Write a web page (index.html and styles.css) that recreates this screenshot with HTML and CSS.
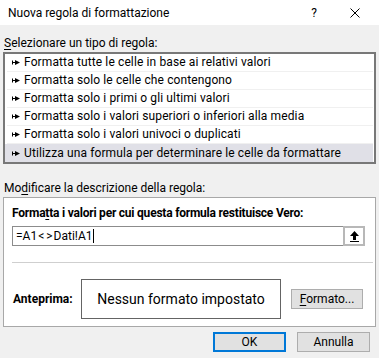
FILE: index.html
```html
<!DOCTYPE html>
<html lang="it">
<head>
<meta charset="utf-8">
<title>Nuova regola di formattazione</title>
<link rel="stylesheet" href="styles.css">
</head>
<body>
<div class="dialog">
  <div class="titlebar">
    <span class="title">Nuova regola di formattazione</span>
    <span class="help">?</span>
    <span class="close"><svg width="10" height="10" viewBox="0 0 10 10"><path d="M0.5 0.5L9.5 9.5M9.5 0.5L0.5 9.5" stroke="#000" stroke-width="1" fill="none"/></svg></span>
  </div>
  <div class="main">
    <div class="label label-select"><u>S</u>elezionare un tipo di regola:</div>
    <ul class="list">
      <li><svg class="arrow" width="8" height="5" viewBox="0 0 8 5"><path d="M0 0.5h1v1.5h2V0l5 2.5L3 5V3H1v1.5H0z" fill="#000"/></svg>Formatta tutte le celle in base ai relativi valori</li>
      <li><svg class="arrow" width="8" height="5" viewBox="0 0 8 5"><path d="M0 0.5h1v1.5h2V0l5 2.5L3 5V3H1v1.5H0z" fill="#000"/></svg>Formatta solo le celle che contengono</li>
      <li><svg class="arrow" width="8" height="5" viewBox="0 0 8 5"><path d="M0 0.5h1v1.5h2V0l5 2.5L3 5V3H1v1.5H0z" fill="#000"/></svg>Formatta solo i primi o gli ultimi valori</li>
      <li><svg class="arrow" width="8" height="5" viewBox="0 0 8 5"><path d="M0 0.5h1v1.5h2V0l5 2.5L3 5V3H1v1.5H0z" fill="#000"/></svg>Formatta solo i valori superiori o inferiori alla media</li>
      <li><svg class="arrow" width="8" height="5" viewBox="0 0 8 5"><path d="M0 0.5h1v1.5h2V0l5 2.5L3 5V3H1v1.5H0z" fill="#000"/></svg>Formatta solo i valori univoci o duplicati</li>
      <li class="selected"><svg class="arrow" width="8" height="5" viewBox="0 0 8 5"><path d="M0 0.5h1v1.5h2V0l5 2.5L3 5V3H1v1.5H0z" fill="#000"/></svg>Utilizza una formula per determinare le celle da formattare</li>
    </ul>
    <div class="label label-desc">Mo<u>d</u>ificare la descrizione della regola:</div>
    <div class="desc">
      <div class="bold desc-title">Forma<u>t</u>ta i valori per cui questa formula restituisce Vero:</div>
      <div class="input">
        <span class="formula">=A1<span class="op">&lt;</span><span class="op">&gt;</span>Dati!A1</span><span class="caret"></span>
        <span class="upbtn"><svg width="9" height="11" viewBox="0 0 9 11"><path d="M4.5 0L9 5H6V9H3V5H0Z" fill="#000"/><rect x="0" y="10" width="9" height="1" fill="#000"/></svg></span>
      </div>
      <div class="sep"></div>
      <div class="preview-row">
        <span class="bold preview-label">Anteprima:</span>
        <div class="preview">Nessun formato impostato</div>
        <button class="btn btn-format"><u>F</u>ormato...</button>
      </div>
    </div>
    <div class="actions">
      <button class="btn btn-ok">OK</button>
      <button class="btn">Annulla</button>
    </div>
  </div>
</div>
</body>
</html>
```

FILE: styles.css
```css
html, body {
  margin: 0;
  padding: 0;
}
body {
  width: 379px;
  height: 358px;
  overflow: hidden;
  background: #f0f0f0;
  font-family: Roboto, "Noto Sans", "Liberation Sans", sans-serif;
  font-size: 12px;
  color: #000;
}
.dialog {
  display: flex;
  flex-direction: column;
}
.titlebar {
  height: 25px;
  background: #fff;
  display: flex;
  align-items: center;
}
.title {
  padding-left: 8px;
  font-size: 12px;
}
.help {
  margin-left: auto;
  width: 12px;
  text-align: center;
  font-size: 12px;
}
.close {
  display: flex;
  margin-left: 30px;
  margin-right: 19px;
}
.main {
  padding: 0 3px;
  display: flex;
  flex-direction: column;
}
.label {
  line-height: 16px;
  height: 16px;
  padding-left: 1px;
}
.label u, .desc-title u, .btn u {
  text-underline-offset: 2px;
}
.label-select {
  margin-top: 10px;
}
.list {
  list-style: none;
  margin: 1px 0 0 0;
  padding: 0;
  height: 112px;
  box-sizing: border-box;
  border: 2px solid #787878;
  background: #fff;
}
.list li {
  height: 18px;
  box-sizing: border-box;
  border-bottom: 1px solid #f0f0f0;
  margin: 0 1px 0 2px;
  padding-left: 5px;
  display: flex;
  align-items: center;
  line-height: 17px;
  white-space: nowrap;
  letter-spacing: 0.12px;
}
.list li.selected {
  background: #e0e0e7;
  border-bottom: none;
  margin-left: 0;
  padding-left: 7px;
}
.arrow {
  flex: none;
  margin-right: 4px;
}
.label-desc {
  margin-top: 16px;
}
.desc {
  margin-top: 1px;
  height: 130px;
  box-sizing: border-box;
  border: 1px solid #a8a8a8;
  background: #fff;
  padding: 7px 10px 0 8px;
  display: flex;
  flex-direction: column;
}
.bold {
  font-weight: bold;
}
.desc-title {
  line-height: 16px;
  white-space: nowrap;
  letter-spacing: -0.22px;
}
.input {
  margin-top: 5px;
  height: 20px;
  box-sizing: border-box;
  border: 1px solid #8c8c8c;
  display: flex;
  align-items: center;
}
.formula {
  padding-left: 3px;
  line-height: 16px;
}
.op {
  padding: 0 1px;
}
.caret {
  width: 1px;
  height: 14px;
  background: #000;
  margin-left: 1px;
}
.upbtn {
  margin-left: auto;
  height: 20px;
  width: 22px;
  box-sizing: border-box;
  border: 2px solid #b8b8b8;
  margin-right: -1px;
  background: #fff;
  display: flex;
  align-items: center;
  justify-content: center;
}
.sep {
  margin-top: 16px;
  height: 1px;
  background: #cfcfcf;
  margin-right: -8px;
}
.preview-row {
  margin-top: 16px;
  display: flex;
  align-items: center;
}
.preview-label {
  width: 68px;
  padding-left: 1px;
}
.preview {
  width: 200px;
  height: 40px;
  box-sizing: border-box;
  border: 1px solid #646464;
  display: flex;
  align-items: center;
  justify-content: center;
  font-size: 14px;
}
.btn {
  font-family: Roboto, "Noto Sans", "Liberation Sans", sans-serif;
  font-size: 12px;
  color: #000;
  background: #e1e1e1;
  border: 1px solid #adadad;
  height: 20px;
  width: 73px;
  padding: 0;
  line-height: 16px;
  box-sizing: border-box;
}
.btn-format {
  margin-left: 10px;
  width: 72px;
}
.actions {
  margin-top: 5px;
  display: flex;
  justify-content: flex-end;
  gap: 11px;
  padding-right: 6px;
}
.btn-ok {
  border: 2px solid #0078d7;
}
```
